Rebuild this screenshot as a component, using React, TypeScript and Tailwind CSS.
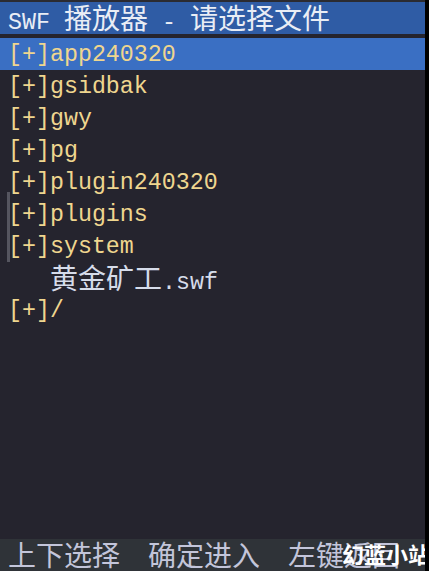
import React from "react";

const CJK = /[\u3000-\u9fff\uff00-\uffef]+|[^\u3000-\u9fff\uff00-\uffef]+/g;

// ascii is half width (14px), cjk full width (28px)
function Txt({ s }: { s: string }) {
  const parts = s.match(CJK) || [];
  return (
    <span className="whitespace-pre font-['Liberation_Mono',monospace] text-[23.3px] leading-none">
      {parts.map((p, i) =>
        /[\u3000-\u9fff]/.test(p) ? (
          <span
            key={i}
            className="font-['Noto_Sans_CJK_SC',sans-serif] text-[28px] leading-none"
          >
            {p}
          </span>
        ) : (
          <span key={i}>{p}</span>
        )
      )}
    </span>
  );
}

const rows = [
  { name: "app240320", dir: true },
  { name: "gsidbak", dir: true },
  { name: "gwy", dir: true },
  { name: "pg", dir: true },
  { name: "plugin240320", dir: true },
  { name: "plugins", dir: true },
  { name: "system", dir: true },
  { name: "   黄金矿工.swf", dir: false },
  { name: "/", dir: true },
];

export default function App() {
  const selected = 0;

  return (
    <div className="flex h-[571px] w-[429px] overflow-hidden bg-[#25242e]">
      <div className="flex min-w-0 flex-1 flex-col">
        <div className="h-[2px] bg-[#2b2b31]" />

        {/* TITLE */}
        <div className="flex h-8 items-center bg-[#2f5ca5] px-2 pt-[2px] text-[#e9edf5]">
          <Txt s="SWF 播放器 - 请选择文件" />
        </div>

        <div className="h-1" />

        {/* LIST */}
        <div className="relative">
          <div className="absolute left-[7px] top-[154px] h-[70px] w-[3px] bg-[#55555f]" />
          {rows.map((r, i) => (
            <div
              key={i}
              className={`flex h-8 items-center px-2 pt-[3px] ${
                i === selected ? "bg-[#3a6fc3]" : ""
              } ${r.dir ? "text-[#efd68f]" : "text-[#d6dcea]"}`}
            >
              <Txt s={r.dir ? "[+]" + r.name : r.name} />
            </div>
          ))}
        </div>

        <div className="flex-1" />

        {/* FOOTER */}
        <div className="relative flex h-8 items-center overflow-hidden bg-[#2f3338] px-2 pt-[2px] text-[#c3c5da]">
          <Txt s="上下选择  确定进入  左键返回" />
          <span className="absolute left-[342px] top-[3px] whitespace-nowrap font-['Noto_Sans_CJK_SC',sans-serif] text-[22px] font-bold leading-none text-white">
            幻蓝小站
          </span>
        </div>
      </div>
      <div className="w-1 bg-black" />
    </div>
  );
}
